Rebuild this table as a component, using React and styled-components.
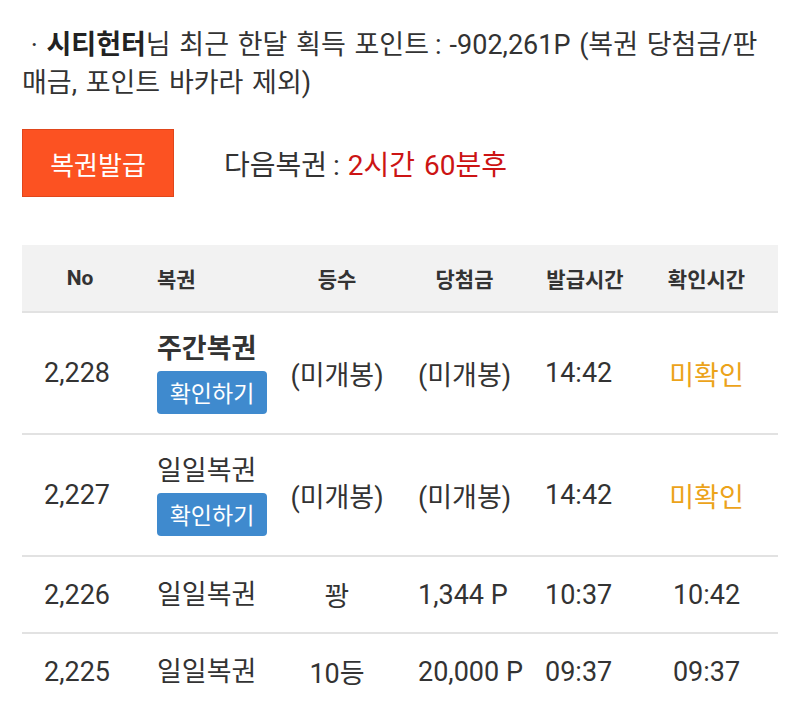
import React from 'react';
import styled, { createGlobalStyle } from 'styled-components';

const GlobalStyle = createGlobalStyle`
    body {
        margin: 0;
        background: #ffffff;
        font-family: Roboto, "Noto Sans CJK KR", sans-serif;
        color: #333333;
    }
`;

const Page = styled.div`
    padding: 26px 22px 0;
    width: 800px;
    box-sizing: border-box;
`;

const Summary = styled.p`
    margin: 0;
    font-size: 27px;
    line-height: 38px;
    word-spacing: 2px;
    color: #333;
`;

const Name = styled.b`
    font-weight: 700;
    color: #222;
`;

const Colon = styled.span`
    margin: 0 8px 0 6px;
`;

const IssueRow = styled.div`
    display: flex;
    align-items: center;
    gap: 50px;
    margin-top: 27px;
`;

const IssueButton = styled.button`
    width: 152px;
    height: 68px;
    background: #fc5222;
    border: 1px solid #e0461b;
    color: #fff;
    font-family: inherit;
    font-size: 26px;
    padding: 0;
`;

const NextInfo = styled.div`
    font-size: 28px;
    color: #333;
`;

const Red = styled.span`
    color: #cc1414;
    word-spacing: 2px;
`;

const Table = styled.div`
    margin-top: 48px;
    display: grid;
    grid-template-columns: 116px 142px 114px 141px 100px 143px;
`;

const HeadCell = styled.div`
    background: #f2f2f2;
    height: 66px;
    display: flex;
    align-items: center;
    justify-content: ${(p) => (p.$left ? 'flex-start' : 'center')};
    padding-left: ${(p) => (p.$left ? '19px' : '0')};
    font-size: 21px;
    font-weight: 700;
    color: #333;
    border-bottom: 2px solid #e2e2e2;
`;

const Cell = styled.div`
    min-height: ${(p) => p.$h}px;
    display: flex;
    flex-direction: column;
    justify-content: center;
    align-items: ${(p) => (p.$center ? 'center' : 'flex-start')};
    padding-left: ${(p) => p.$pl || 0}px;
    font-size: 27px;
    color: ${(p) => p.$color || '#333'};
    border-bottom: 2px solid #e2e2e2;
    white-space: nowrap;
    box-sizing: border-box;
`;

const TicketName = styled.div`
    font-weight: ${(p) => (p.$bold ? 700 : 400)};
    line-height: 32px;
`;

const CheckButton = styled.button`
    margin-top: 6px;
    width: 110px;
    height: 43px;
    background: #3f8ace;
    border: none;
    border-radius: 4px;
    color: #fff;
    font-family: inherit;
    font-size: 23px;
    padding: 0;
`;

const rows = [
    { no: '2,228', name: '주간복권', bold: true, btn: true, rank: '(미개봉)', prize: '(미개봉)', issued: '14:42', checked: '미확인', h: 122 },
    { no: '2,227', name: '일일복권', btn: true, rank: '(미개봉)', prize: '(미개봉)', issued: '14:42', checked: '미확인', h: 122 },
    { no: '2,226', name: '일일복권', rank: '꽝', prize: '1,344 P', issued: '10:37', checked: '10:42', h: 77 },
    { no: '2,225', name: '일일복권', rank: '10등', prize: '20,000 P', issued: '09:37', checked: '09:37', h: 77 },
];

export default function App() {
    return (
        <Page>
            <GlobalStyle />
            <Summary>
                &nbsp;· <Name>시티헌터</Name>님 최근 한달 획득 포인트<Colon>:</Colon>-902,261P (복권 당첨금/판매금, 포인트 바카라 제외)
            </Summary>
            <IssueRow>
                <IssueButton>복권발급</IssueButton>
                <NextInfo>
                    다음복권<Colon>:</Colon><Red>2시간 60분후</Red>
                </NextInfo>
            </IssueRow>
            <Table>
                <HeadCell>No</HeadCell>
                <HeadCell $left>복권</HeadCell>
                <HeadCell>등수</HeadCell>
                <HeadCell>당첨금</HeadCell>
                <HeadCell>발급시간</HeadCell>
                <HeadCell>확인시간</HeadCell>
                {rows.map((r) => (
                    <React.Fragment key={r.no}>
                        <Cell $h={r.h} $pl={22}>{r.no}</Cell>
                        <Cell $h={r.h} $pl={19}>
                            <TicketName $bold={r.bold}>{r.name}</TicketName>
                            {r.btn && <CheckButton>확인하기</CheckButton>}
                        </Cell>
                        <Cell $h={r.h} $center>{r.rank}</Cell>
                        <Cell $h={r.h} $pl={24}>{r.prize}</Cell>
                        <Cell $h={r.h} $pl={10}>{r.issued}</Cell>
                        <Cell $h={r.h} $center $color={r.checked === '미확인' ? '#eca31a' : '#333'}>
                            {r.checked}
                        </Cell>
                    </React.Fragment>
                ))}
            </Table>
        </Page>
    );
}
